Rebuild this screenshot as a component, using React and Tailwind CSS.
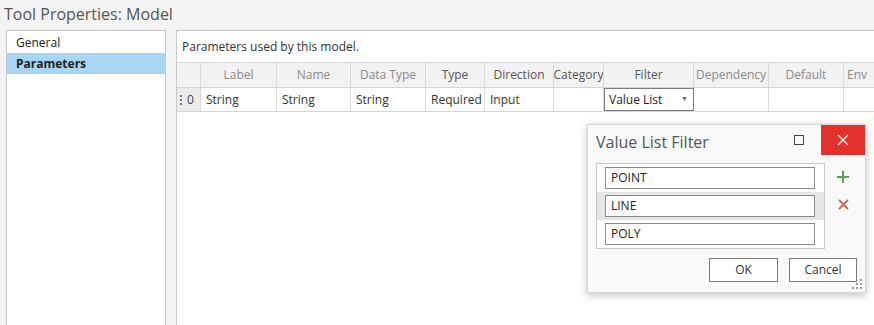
import React from "react";

const cols = [
  { key: "handle", label: "", w: 24 },
  { key: "label", label: "Label", w: 76, light: true },
  { key: "name", label: "Name", w: 74, light: true },
  { key: "dtype", label: "Data Type", w: 75, light: true },
  { key: "type", label: "Type", w: 59 },
  { key: "dir", label: "Direction", w: 69 },
  { key: "cat", label: "Category", w: 50 },
  { key: "filter", label: "Filter", w: 90 },
  { key: "dep", label: "Dependency", w: 75, light: true },
  { key: "def", label: "Default", w: 75, light: true },
  { key: "env", label: "Env", w: 40, light: true },
];

const row = {
  label: "String",
  name: "String",
  dtype: "String",
  type: "Required",
  dir: "Input",
  cat: "",
  dep: "",
  def: "",
  env: "",
};

function ValueListDialog() {
  const values = ["POINT", "LINE", "POLY"];
  return (
    <div className="absolute left-[587px] top-[124px] w-[279px] h-[169px] bg-[#f9f9f9] border border-[#d6d6d6] shadow-[0_2px_8px_rgba(0,0,0,0.25)]">
      {/* title bar */}
      <div className="flex items-start h-[38px]">
        <div className="pl-[8px] pt-[5px] text-[16px] text-[#555] flex-1">Value List Filter</div>
        <div className="w-[44px] h-[30px] flex items-center justify-center">
          <div className="w-[10px] h-[10px] border border-[#444]" />
        </div>
        <div className="w-[44px] h-[30px] bg-[#e3302b] flex items-center justify-center">
          <svg width="12" height="12" viewBox="0 0 12 12">
            <path d="M1 1L11 11M11 1L1 11" stroke="#fff" strokeWidth="1.2" />
          </svg>
        </div>
      </div>
      <div className="flex pl-[8px]">
        <div className="w-[229px] h-[86px] bg-white border border-[#c8c8c8] flex flex-col">
          {values.map((v, i) => (
            <div
              key={v}
              className={`h-[28px] flex items-center pl-[8px] ${i === 1 ? "bg-[#e6e6e6]" : ""}`}
            >
              <div className="w-[210px] h-[22px] border border-[#8a8a8a] bg-white flex items-center pl-[5px] text-[12px] text-[#222]">
                {v}
              </div>
            </div>
          ))}
        </div>
        <div className="flex flex-col items-center w-[36px] pt-[8px] gap-[16px]">
          <svg width="12" height="12" viewBox="0 0 12 12">
            <path d="M6 0V12M0 6H12" stroke="#5c9b58" strokeWidth="2" />
          </svg>
          <svg width="11" height="11" viewBox="0 0 11 11">
            <path d="M1 1L10 10M10 1L1 10" stroke="#c9694f" strokeWidth="1.8" />
          </svg>
        </div>
      </div>
      <div className="flex justify-end gap-[11px] pr-[8px] pt-[9px]">
        <div className="w-[69px] h-[24px] border border-[#7a7a7a] bg-white flex items-center justify-center text-[12px] text-[#333]">
          OK
        </div>
        <div className="w-[68px] h-[24px] border border-[#7a7a7a] bg-white flex items-center justify-center text-[12px] text-[#333]">
          Cancel
        </div>
      </div>
      <svg className="absolute right-[3px] bottom-[3px]" width="10" height="10" viewBox="0 0 10 10">
        <g fill="#9a9a9a">
          <rect x="8" y="0" width="2" height="2" />
          <rect x="4" y="4" width="2" height="2" />
          <rect x="8" y="4" width="2" height="2" />
          <rect x="0" y="8" width="2" height="2" />
          <rect x="4" y="8" width="2" height="2" />
          <rect x="8" y="8" width="2" height="2" />
        </g>
      </svg>
    </div>
  );
}

export default function App() {
  return (
    <div
      className="relative w-[874px] h-[325px] overflow-hidden bg-[#f3f3f3]"
      style={{ fontFamily: '"Open Sans", "Noto Sans", sans-serif' }}
    >
      <div className="h-[30px] pl-[4px] pt-[3px] text-[16px] text-[#555] leading-[22px]">
        Tool Properties: Model
      </div>

      <div className="flex pl-[6px] gap-[10px] h-[295px]">
        {/* left nav */}
        <div className="w-[160px] shrink-0 h-[300px] bg-white border border-[#c8c8c8] pt-[1px] text-[12px] text-[#222]">
          <div className="h-[21px] flex items-center pl-[9px]">General</div>
          <div className="h-[21px] flex items-center pl-[9px] bg-[#a8d6f2] font-bold">Parameters</div>
        </div>

        {/* right panel */}
        <div className="flex-1 min-w-0 overflow-hidden h-[300px] bg-white border border-[#c8c8c8] border-r-0">
          <div className="h-[32px] flex items-center pl-[5px] text-[12px] text-[#333] border-b border-[#d8d8d8]">
            Parameters used by this model.
          </div>
          <div className="flex h-[25px] bg-[#f2f2f2] border-b border-[#d6d6d6]">
            {cols.map((c) => (
              <div
                key={c.key}
                style={{ width: c.w }}
                className={`shrink-0 flex items-center border-r border-[#d8d8d8] text-[12px] whitespace-nowrap overflow-hidden ${c.key === "env" ? "justify-start pl-[3px]" : "justify-center"} ${c.light ? "text-[#8a8a8a]" : "text-[#555]"}`}
              >
                {c.label}
              </div>
            ))}
          </div>
          <div className="flex h-[24px] border-b border-[#d6d6d6]">
            {cols.map((c) => {
              if (c.key === "handle") {
                return (
                  <div
                    key={c.key}
                    style={{ width: c.w }}
                    className="shrink-0 flex items-center gap-[5px] pl-[3px] bg-[#ececec] border-r border-[#d8d8d8] text-[12px] text-[#444]"
                  >
                    <span className="flex flex-col gap-[2px]">
                      <span className="w-[2px] h-[2px] bg-[#777]" />
                      <span className="w-[2px] h-[2px] bg-[#777]" />
                      <span className="w-[2px] h-[2px] bg-[#777]" />
                    </span>
                    0
                  </div>
                );
              }
              if (c.key === "filter") {
                return (
                  <div
                    key={c.key}
                    style={{ width: c.w }}
                    className="shrink-0 flex items-center justify-between border border-[#7a7a7a] pl-[4px] pr-[5px] text-[12px] text-[#222]"
                  >
                    Value List
                    <span className="text-[7px] text-[#666]">▼</span>
                  </div>
                );
              }
              return (
                <div
                  key={c.key}
                  style={{ width: c.w }}
                  className="shrink-0 flex items-center pl-[5px] border-r border-[#d8d8d8] text-[12px] text-[#333] whitespace-nowrap"
                >
                  {row[c.key]}
                </div>
              );
            })}
          </div>
        </div>
      </div>

      <ValueListDialog />
    </div>
  );
}
